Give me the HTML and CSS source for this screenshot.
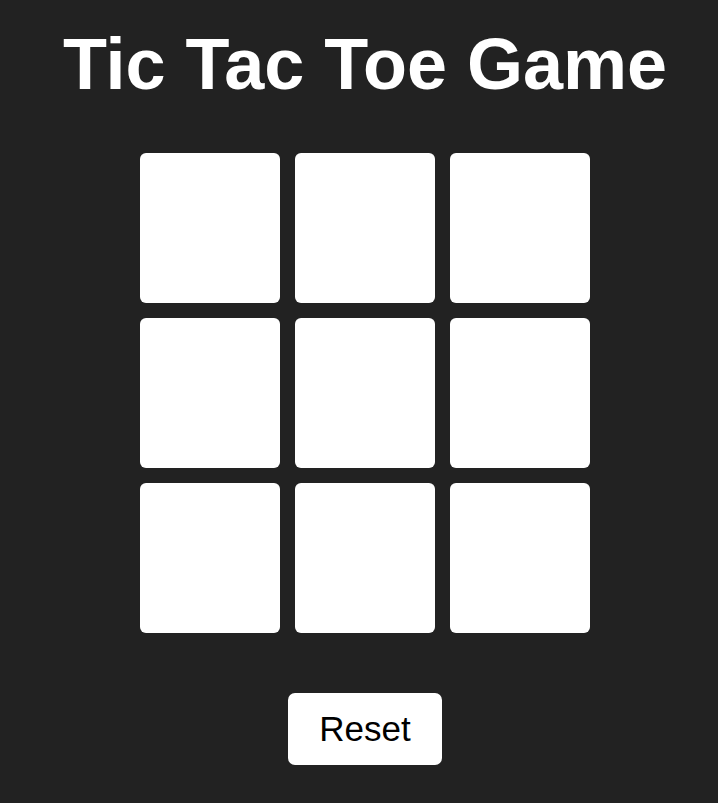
FILE: index.html
```html
<!DOCTYPE html>
<html lang="en">
<head>
<meta charset="utf-8">
<title>Tic Tac Toe Game</title>
<link rel="stylesheet" href="styles.css">
</head>
<body>
<main class="game">
  <h1 class="title">Tic Tac Toe Game</h1>
  <div class="board">
    <div class="cell"></div>
    <div class="cell"></div>
    <div class="cell"></div>
    <div class="cell"></div>
    <div class="cell"></div>
    <div class="cell"></div>
    <div class="cell"></div>
    <div class="cell"></div>
    <div class="cell"></div>
  </div>
  <button class="reset" type="button">Reset</button>
</main>
</body>
</html>
```

FILE: styles.css
```css
html, body {
  margin: 0;
  padding: 0;
  background: #222222;
}

body {
  font-family: "Liberation Sans", Arial, sans-serif;
  color: #ffffff;
}

.game {
  display: flex;
  flex-direction: column;
  align-items: center;
  padding-left: 12px;
}

.title {
  margin: 24px 0 0;
  font-size: 72px;
  line-height: 80px;
  font-weight: 700;
  color: #ffffff;
  white-space: nowrap;
}

.board {
  margin-top: 49px;
  display: grid;
  grid-template-columns: repeat(3, 140px);
  grid-auto-rows: 150px;
  gap: 15px;
}

.cell {
  background: #ffffff;
  border-radius: 6px;
}

.reset {
  margin-top: 60px;
  padding: 16px 31px;
  font-family: "Liberation Sans", Arial, sans-serif;
  font-size: 35px;
  line-height: 40px;
  color: #000000;
  background: #ffffff;
  border: none;
  border-radius: 7px;
}
```
